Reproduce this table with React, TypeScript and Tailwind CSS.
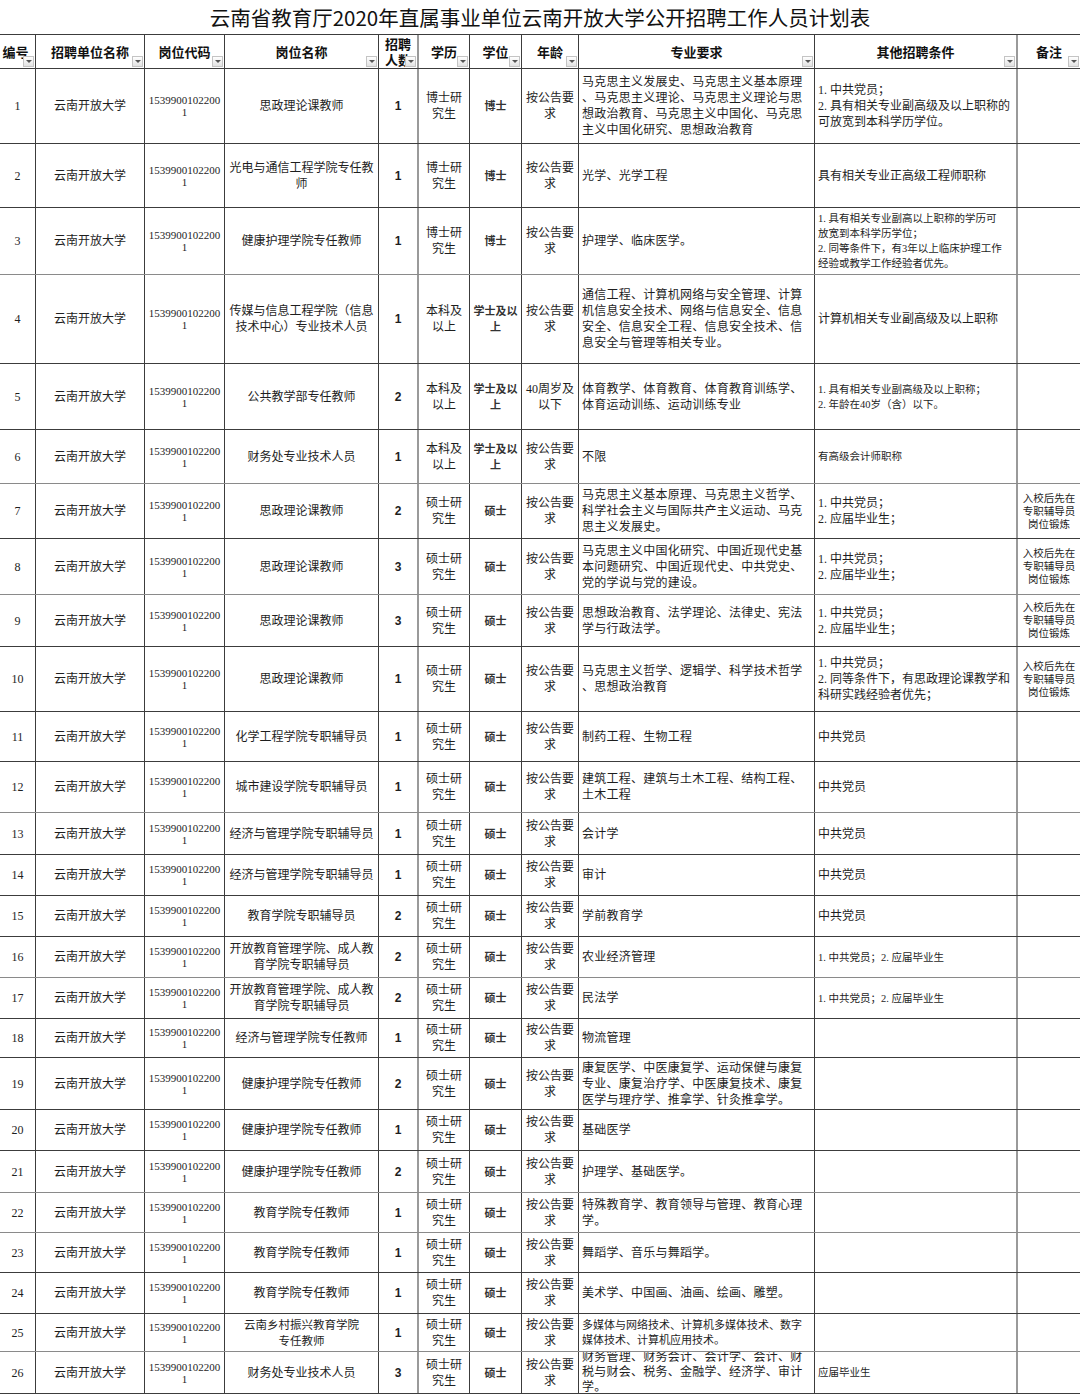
import React from "react";

type Row = {
  h: string;
  name: string[];
  nameSm?: boolean;
  n: number;
  edu: string[];
  deg: string[];
  age: string[];
  major: string[];
  majorSm?: boolean;
  other: string[];
  otherSm?: boolean;
  note?: boolean;
  gray?: boolean;
};

const MS = ["硕士研", "究生"];
const MD = ["硕士"];
const AG = ["按公告要", "求"];
const NOTE = ["入校后先在", "专职辅导员", "岗位锻炼"];
const DANG = ["1. 中共党员；", "2. 应届毕业生；"];

const rows: Row[] = [
  { h: "h-[75px]", name: ["思政理论课教师"], n: 1, edu: ["博士研", "究生"], deg: ["博士"], age: AG, major: ["马克思主义发展史、马克思主义基本原理", "、马克思主义理论、马克思主义理论与思", "想政治教育、马克思主义中国化、马克思", "主义中国化研究、思想政治教育"], other: ["1. 中共党员；", "2. 具有相关专业副高级及以上职称的", "可放宽到本科学历学位。"] },
  { h: "h-[64px]", name: ["光电与通信工程学院专任教", "师"], n: 1, edu: ["博士研", "究生"], deg: ["博士"], age: AG, major: ["光学、光学工程"], other: ["具有相关专业正高级工程师职称"] },
  { h: "h-[67px]", name: ["健康护理学院专任教师"], n: 1, edu: ["博士研", "究生"], deg: ["博士"], age: AG, major: ["护理学、临床医学。"], other: ["1. 具有相关专业副高以上职称的学历可", "放宽到本科学历学位；", "2. 同等条件下，有3年以上临床护理工作", "经验或教学工作经验者优先。"], otherSm: true, gray: true },
  { h: "h-[89px]", name: ["传媒与信息工程学院（信息", "技术中心）专业技术人员"], n: 1, edu: ["本科及", "以上"], deg: ["学士及以", "上"], age: AG, major: ["通信工程、计算机网络与安全管理、计算", "机信息安全技术、网络与信息安全、信息", "安全、信息安全工程、信息安全技术、信", "息安全与管理等相关专业。"], other: ["计算机相关专业副高级及以上职称"] },
  { h: "h-[66px]", name: ["公共教学部专任教师"], n: 2, edu: ["本科及", "以上"], deg: ["学士及以", "上"], age: ["40周岁及", "以下"], major: ["体育教学、体育教育、体育教育训练学、", "体育运动训练、运动训练专业"], other: ["1. 具有相关专业副高级及以上职称；", "2. 年龄在40岁（含）以下。"], otherSm: true },
  { h: "h-[54px]", name: ["财务处专业技术人员"], n: 1, edu: ["本科及", "以上"], deg: ["学士及以", "上"], age: AG, major: ["不限"], other: ["有高级会计师职称"], otherSm: true, gray: true },
  { h: "h-[55px]", name: ["思政理论课教师"], n: 2, edu: MS, deg: MD, age: AG, major: ["马克思主义基本原理、马克思主义哲学、", "科学社会主义与国际共产主义运动、马克", "思主义发展史。"], other: DANG, note: true },
  { h: "h-[56px]", name: ["思政理论课教师"], n: 3, edu: MS, deg: MD, age: AG, major: ["马克思主义中国化研究、中国近现代史基", "本问题研究、中国近现代史、中共党史、", "党的学说与党的建设。"], other: DANG, note: true, gray: true },
  { h: "h-[52px]", name: ["思政理论课教师"], n: 3, edu: MS, deg: MD, age: AG, major: ["思想政治教育、法学理论、法律史、宪法", "学与行政法学。"], other: DANG, note: true },
  { h: "h-[65px]", name: ["思政理论课教师"], n: 1, edu: MS, deg: MD, age: AG, major: ["马克思主义哲学、逻辑学、科学技术哲学", "、思想政治教育"], other: ["1. 中共党员；", "2. 同等条件下，有思政理论课教学和", "科研实践经验者优先；"], note: true },
  { h: "h-[50px]", name: ["化学工程学院专职辅导员"], n: 1, edu: MS, deg: MD, age: AG, major: ["制药工程、生物工程"], other: ["中共党员"] },
  { h: "h-[51px]", name: ["城市建设学院专职辅导员"], n: 1, edu: MS, deg: MD, age: AG, major: ["建筑工程、建筑与土木工程、结构工程、", "土木工程"], other: ["中共党员"], gray: true },
  { h: "h-[42px]", name: ["经济与管理学院专职辅导员"], n: 1, edu: MS, deg: MD, age: AG, major: ["会计学"], other: ["中共党员"] },
  { h: "h-[41px]", name: ["经济与管理学院专职辅导员"], n: 1, edu: MS, deg: MD, age: AG, major: ["审计"], other: ["中共党员"] },
  { h: "h-[41px]", name: ["教育学院专职辅导员"], n: 2, edu: MS, deg: MD, age: AG, major: ["学前教育学"], other: ["中共党员"] },
  { h: "h-[41px]", name: ["开放教育管理学院、成人教", "育学院专职辅导员"], n: 2, edu: MS, deg: MD, age: AG, major: ["农业经济管理"], other: ["1. 中共党员；2. 应届毕业生"], otherSm: true, gray: true },
  { h: "h-[41px]", name: ["开放教育管理学院、成人教", "育学院专职辅导员"], n: 2, edu: MS, deg: MD, age: AG, major: ["民法学"], other: ["1. 中共党员；2. 应届毕业生"], otherSm: true },
  { h: "h-[39px]", name: ["经济与管理学院专任教师"], n: 1, edu: MS, deg: MD, age: AG, major: ["物流管理"], other: [] },
  { h: "h-[52px]", name: ["健康护理学院专任教师"], n: 2, edu: MS, deg: MD, age: AG, major: ["康复医学、中医康复学、运动保健与康复", "专业、康复治疗学、中医康复技术、康复", "医学与理疗学、推拿学、针灸推拿学。"], other: [] },
  { h: "h-[41px]", name: ["健康护理学院专任教师"], n: 1, edu: MS, deg: MD, age: AG, major: ["基础医学"], other: [] },
  { h: "h-[42px]", name: ["健康护理学院专任教师"], n: 2, edu: MS, deg: MD, age: AG, major: ["护理学、基础医学。"], other: [], gray: true },
  { h: "h-[40px]", name: ["教育学院专任教师"], n: 1, edu: MS, deg: MD, age: AG, major: ["特殊教育学、教育领导与管理、教育心理", "学。"], other: [], gray: true },
  { h: "h-[40px]", name: ["教育学院专任教师"], n: 1, edu: MS, deg: MD, age: AG, major: ["舞蹈学、音乐与舞蹈学。"], other: [] },
  { h: "h-[41px]", name: ["教育学院专任教师"], n: 1, edu: MS, deg: MD, age: AG, major: ["美术学、中国画、油画、绘画、雕塑。"], other: [] },
  { h: "h-[38px]", name: ["云南乡村振兴教育学院", "专任教师"], nameSm: true, n: 1, edu: MS, deg: MD, age: AG, major: ["多媒体与网络技术、计算机多媒体技术、数字", "媒体技术、计算机应用技术。"], majorSm: true, other: [], gray: true },
  { h: "h-[42px]", name: ["财务处专业技术人员"], n: 3, edu: MS, deg: MD, age: AG, major: ["财务管理、财务会计、会计学、会计、财", "税与财会、税务、金融学、经济学、审计", "学。"], majorSm: false, other: ["应届毕业生"], otherSm: true },
];

const GRID =
  "grid grid-cols-[36px_109px_80px_154px_40px_51px_52px_57px_236px_203px_62px]";
const FONT = "font-['Liberation_Serif','Noto_Sans_CJK_SC',serif]";
const CELL = "border-r border-[#3c3c3c] flex items-center overflow-hidden";

function Lines({ lines }: { lines: string[] }) {
  return (
    <div>
      {lines.map((l, i) => (
        <div key={i} className="whitespace-nowrap">
          {l}
        </div>
      ))}
    </div>
  );
}

function Drop() {
  return (
    <div className="absolute right-[1px] bottom-[1px] w-[11px] h-[11px] border border-[#c4c4c4] bg-gradient-to-b from-white to-[#e2e2e2] flex items-center justify-center">
      <div className="w-0 h-0 border-l-[3px] border-r-[3px] border-t-[3px] border-l-transparent border-r-transparent border-t-[#555]" />
    </div>
  );
}

function Head({
  children,
  cls = "",
}: {
  children: React.ReactNode;
  cls?: string;
}) {
  return (
    <div
      className={`relative border-r border-[#3c3c3c] flex items-center justify-center font-bold text-[13px] leading-[16px] text-[#111] ${cls}`}
    >
      {children}
      <Drop />
    </div>
  );
}

export default function App() {
  return (
    <div className={`w-[1080px] bg-white text-[#1e1e1e] ${FONT}`}>
      <div className="h-[34px] flex items-center justify-center text-[20.5px] text-[#111] font-['Noto_Sans_CJK_SC',sans-serif]">
        云南省教育厅2020年直属事业单位云南开放大学公开招聘工作人员计划表
      </div>
      <div
        className={`${GRID} h-[35px] border-t border-b border-[#3c3c3c] font-['Noto_Sans_CJK_SC',sans-serif]`}
      >
        <Head cls="pr-[4px]">编号</Head>
        <Head>招聘单位名称</Head>
        <Head>岗位代码</Head>
        <Head>岗位名称</Head>
        <Head cls="border-r-2 border-r-[#9a9a9a] text-[12px]">
          <Lines lines={["招聘", "人数"]} />
        </Head>
        <Head>学历</Head>
        <Head>学位</Head>
        <Head>年龄</Head>
        <Head>专业要求</Head>
        <Head cls="border-r-2 border-r-[#9a9a9a]">其他招聘条件</Head>
        <Head cls="border-r-0">备注</Head>
      </div>
      {rows.map((r, i) => (
        <div
          key={i}
          className={`${GRID} ${r.h} border-b ${
            r.gray ? "border-b-[#8a8a8a]" : "border-b-[#3c3c3c]"
          }`}
        >
          <div className={`${CELL} justify-center text-[12px]`}>{i + 1}</div>
          <div className={`${CELL} justify-center text-[12px]`}>云南开放大学</div>
          <div
            className={`${CELL} justify-center text-center text-[11px] leading-[12px]`}
          >
            <Lines lines={["1539900102200", "1"]} />
          </div>
          <div
            className={`${CELL} justify-center text-center ${
              r.nameSm ? "text-[11.5px] leading-[16px]" : "text-[12px] leading-[16px]"
            }`}
          >
            <Lines lines={r.name} />
          </div>
          <div
            className={`${CELL} justify-center border-r-2 border-r-[#9a9a9a] font-['Liberation_Sans',sans-serif] font-bold text-[12px]`}
          >
            {r.n}
          </div>
          <div className={`${CELL} justify-center text-center text-[12px] leading-[16px]`}>
            <Lines lines={r.edu} />
          </div>
          <div
            className={`${CELL} justify-center text-center text-[11px] leading-[16px] font-semibold text-[#333]`}
          >
            <Lines lines={r.deg} />
          </div>
          <div className={`${CELL} justify-center text-center text-[12px] leading-[16px]`}>
            <Lines lines={r.age} />
          </div>
          <div
            className={`${CELL} justify-start pl-[3px] ${
              r.majorSm
                ? "text-[11px] leading-[15px]"
                : i === 25
                ? "text-[12px] leading-[15px] tracking-[0.25px]"
                : "text-[12px] leading-[16px] tracking-[0.25px]"
            }`}
          >
            <Lines lines={r.major} />
          </div>
          <div
            className={`${CELL} justify-start pl-[3px] border-r-2 border-r-[#9a9a9a] ${
              r.otherSm ? "text-[10.5px] leading-[15px]" : "text-[12px] leading-[16px]"
            }`}
          >
            <Lines lines={r.other} />
          </div>
          <div
            className={`flex items-center justify-center text-center text-[10.5px] leading-[13px] overflow-hidden`}
          >
            {r.note ? <Lines lines={NOTE} /> : null}
          </div>
        </div>
      ))}
    </div>
  );
}
